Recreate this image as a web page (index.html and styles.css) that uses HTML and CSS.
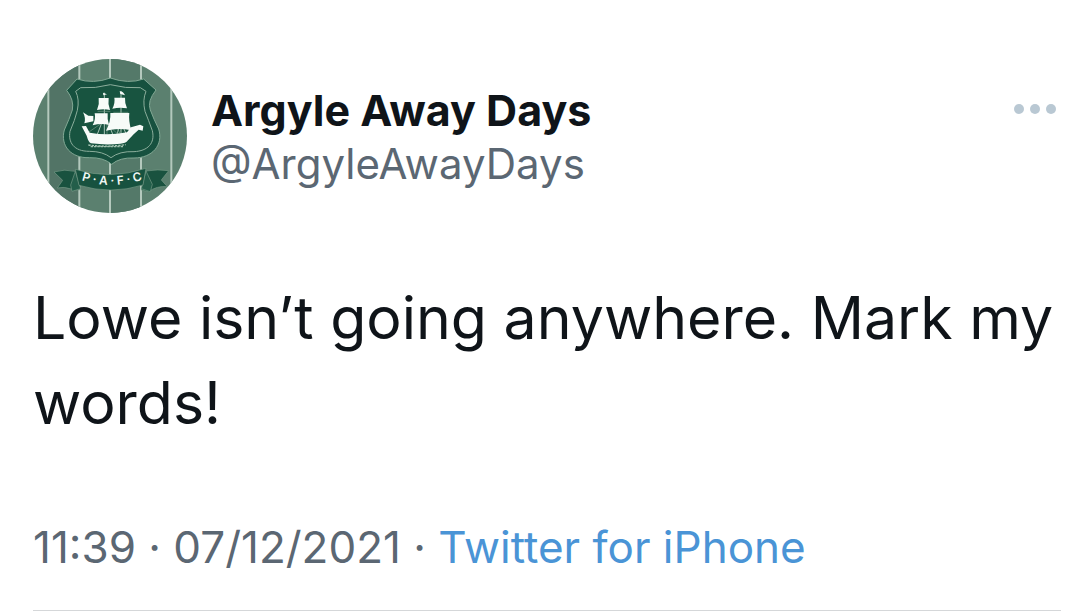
FILE: index.html
```html
<!DOCTYPE html>
<html lang="en">
<head>
	<meta charset="UTF-8">
	<title>Argyle Away Days</title>
	<link rel="stylesheet" href="styles.css">
</head>
<body>
	<article class="tweet">
		<header class="tweet_head">
			<svg class="avatar" viewBox="24 27 462 462" role="img" aria-label="Argyle Away Days">
				<defs>
					<clipPath id="round"><circle cx="255" cy="258" r="231"/></clipPath>
					<path id="motto" d="M155 386 Q260 424 367 384"/>
				</defs>
				<g clip-path="url(#round)">
					<rect x="24" y="27" width="462" height="462" fill="#5b806f"/>
					<rect x="70" y="27" width="93" height="462" fill="#527466"/>
					<rect x="255" y="27" width="93" height="462" fill="#547969"/>
					<path d="M70 27V489M163 27V489M255 27V489M348 27V489M439 27V489" stroke="#b4c9bd" stroke-width="6"/>
					<!-- shield -->
					<path d="M156 87 Q205 103 256 84 Q310 103 356 87 L393 120 Q366 154 376 180 Q386 207 401 237 C416 285 382 324 327 324 Q284 322 260 343 Q236 322 193 323 C138 325 105 287 118 240 Q133 207 142 180 Q148 150 125 121Z" fill="#17513f" stroke="#82a894" stroke-width="3"/>
					<path d="M167 113 Q210 116 256 104 Q303 116 346 113 L363 124 Q352 150 360 184 Q370 209 382 242 C391 280 368 303 327 305 Q284 303 258 323 Q234 304 193 304 C146 304 129 277 135 244 Q150 210 157 181 Q164 148 152 124Z" fill="#185440" stroke="#8cae9c" stroke-width="3"/>
					<!-- ship -->
					<path d="M238 128V254M288 124V256M229 222L215 258M251 222L266 260M282 235L272 264M296 235L307 260" fill="none" stroke="#a8c4b5" stroke-width="3"/>
					<path d="M186 250L238 214L280 254L302 214L326 246M218 184H256M265 187H310M246 218V262M278 218V262" fill="none" stroke="#789d89" stroke-width="2"/>
					<g fill="#f7fbf8">
						<path d="M284 124Q293 122 300 136L286 132ZM234 128L246 133L235 136Z"/>
						<path d="M221 144H251Q248 162 255 180Q237 176 216 180Q224 162 221 144Z"/>
						<path d="M268 143H300Q299 160 306 175Q285 171 262 176Q271 159 268 143Z"/>
						<path d="M209 190H248Q246 207 252 224Q226 219 203 226Q213 207 209 190Z"/>
						<path d="M256 189H313Q310 212 319 241Q280 232 243 242Q258 214 256 189Z"/>
						<path d="M174 187L190 197L205 198L205 214L178 220Q183 204 174 187Z"/>
						<path d="M170 229L183 228L194 248Q249 258 306 247L318 232L345 224L355 229L353 242L341 239L326 253L309 271Q302 281 286 281Q246 286 198 280Q190 276 185 257Z"/>
					</g>
					<path d="M190 285Q246 292 302 284M197 290H297" fill="none" stroke="#a4c3b1" stroke-width="4" stroke-dasharray="7 3"/>
					<!-- ribbon -->
					<path d="M87 366Q117 356 151 364L163 420L139 417Q117 409 97 414L113 391ZM431 362Q399 357 363 363L349 420L370 425Q396 407 427 410L409 390Z" fill="#19523f" stroke="#769a87" stroke-width="2"/>
					<path d="M151 364L137 405L141 424L167 416ZM363 363L382 403L376 425L349 416Z" fill="#235e4a" stroke="#769a87" stroke-width="2"/>
					<path d="M151 358Q254 391 363 355L354 405Q258 435 162 406Z" fill="#17523f" stroke="#779c88" stroke-width="2"/>
					<text class="motto"><textPath href="#motto" startOffset="50%" text-anchor="middle">P · A · F · C</textPath></text>
				</g>
			</svg>
			<div class="author">
				<h1 class="name">Argyle Away Days</h1>
				<p class="handle">@ArgyleAwayDays</p>
			</div>
			<button class="more" type="button" aria-label="More">
				<svg viewBox="0 0 42 10" width="42" height="10" fill="#b9c8d3"><circle cx="5" cy="5" r="5"/><circle cx="21" cy="5" r="5"/><circle cx="37" cy="5" r="5"/></svg>
			</button>
		</header>
		<p class="text">Lowe isn’t going anywhere. Mark my words!</p>
		<footer class="meta">
			<time datetime="2021-12-07T11:39">11:39 · 07/12/2021</time> · <a href="#">Twitter for iPhone</a>
		</footer>
	</article>
</body>
</html>
```
FILE: styles.css
```css
*{
	margin: 0;
	padding: 0;
	box-sizing: border-box;
}
body{
	background: #fff;
	color: #0f1419;
	font-family: Inter, "Liberation Sans", sans-serif;
}
.tweet{
	margin: 59px 31px 0 33px;
	border-bottom: 1px solid #d5d7d9;
}
.tweet_head{
	display: flex;
	align-items: flex-start;
}
.avatar{
	width: 154px;
	height: 154px;
	flex: none;
}
.motto{
	font-size: 36px;
	font-weight: 600;
	fill: #f2f8f4;
}
.author{
	flex: 1;
	margin: 24px 0 0 24px;
}
.name,.handle{
	line-height: 54px;
}
.name{
	font-size: 43px;
	font-weight: 700;
}
.handle{
	font-size: 42px;
	color: #5b6773;
}
.more{
	margin: 45px 5px 0 0;
	border: none;
	background: none;
	cursor: pointer;
}
.more svg{
	display: block;
}
.text{
	margin-top: 62px;
	font-size: 59px;
	line-height: 85px;
}
.meta{
	padding: 75px 0 36px;
	font-size: 44px;
	line-height: 54px;
	color: #5b6773;
}
.meta a{
	color: #4a94d6;
	text-decoration: none;
}
```
